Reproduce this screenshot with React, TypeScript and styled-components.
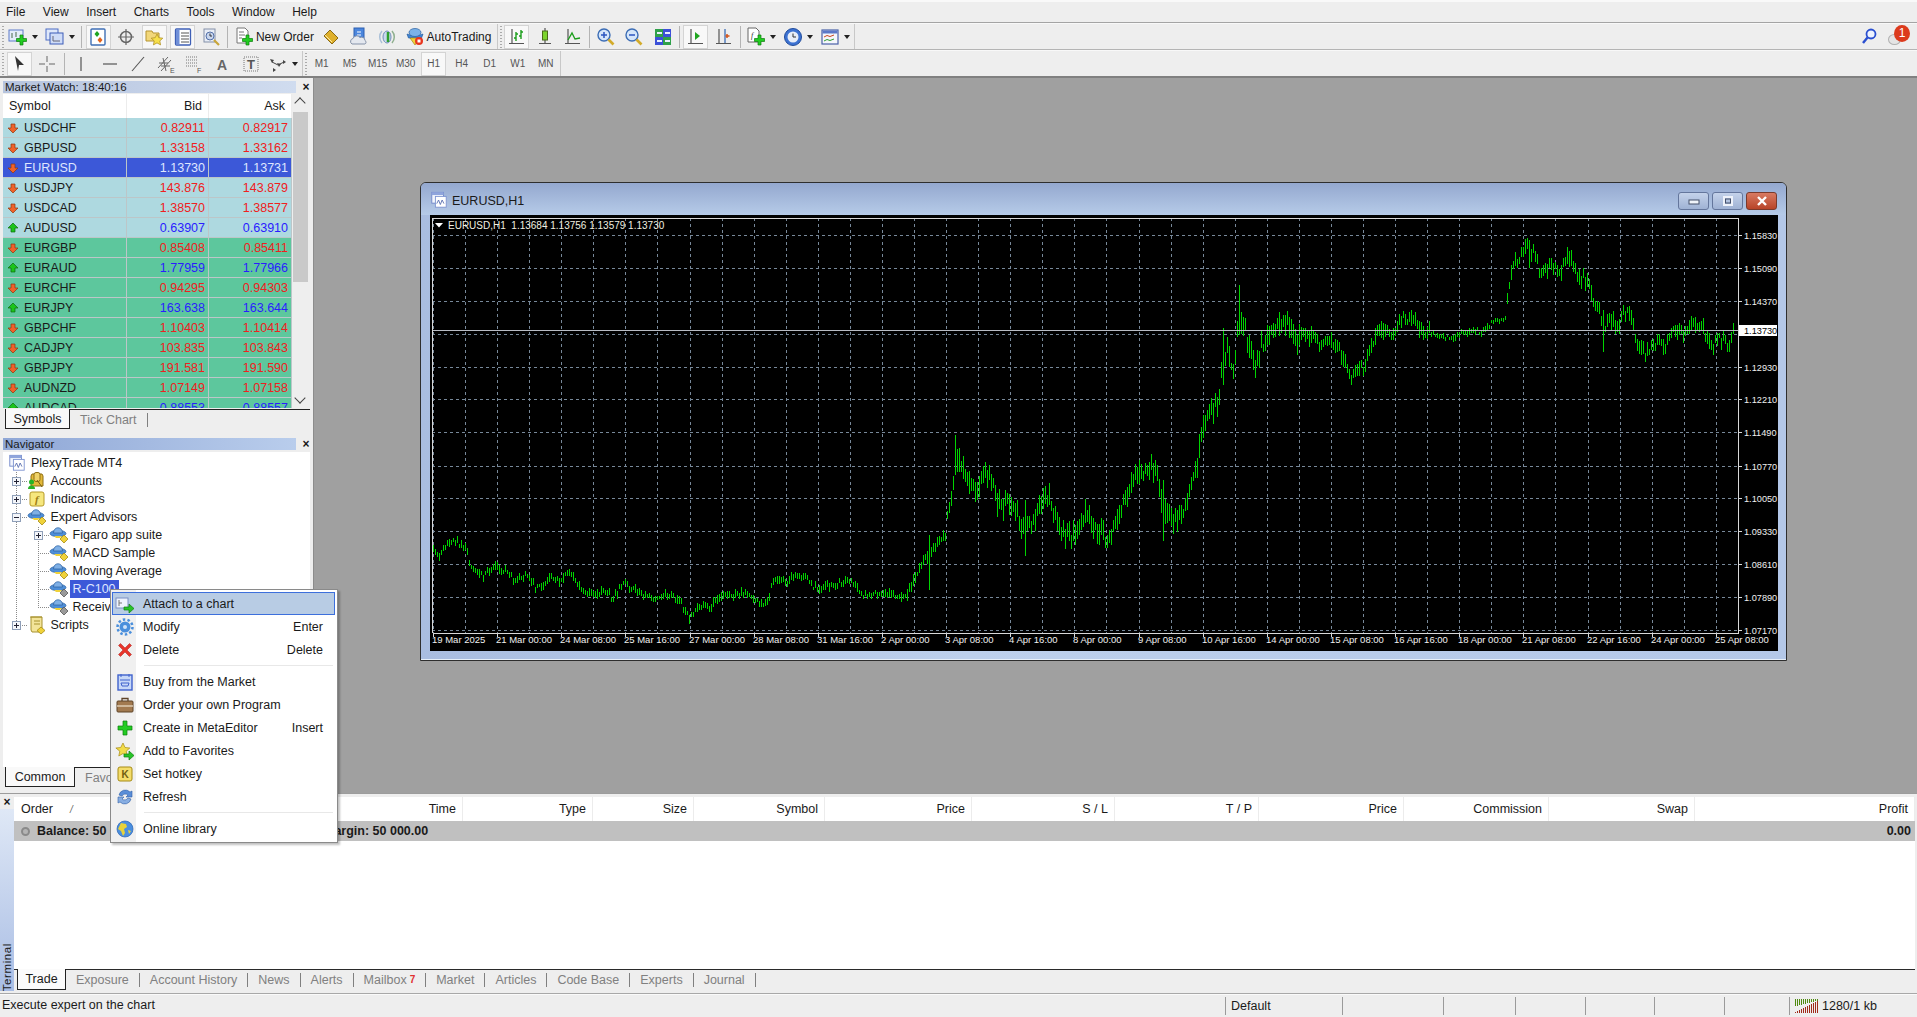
import React, { useMemo } from "react";
import styled, { createGlobalStyle } from "styled-components";

const GlobalStyle = createGlobalStyle`
  html, body { margin: 0; padding: 0; overflow: hidden; background: #eeeeee; }
  body { font: 12px "Liberation Sans", Arial, sans-serif; color: #1a1a1a; }
  * { box-sizing: border-box; }
`;

/* ---------- icons ---------- */
const Ico = ({ children, size = 20 }: { children: React.ReactNode; size?: number }) => (
  <svg width={size} height={size} viewBox="0 0 20 20" style={{ display: "block", flex: "none" }}>
    {children}
  </svg>
);
const GreenPlus = () => (
  <path d="M12 8h3v3.5h3.5v3H15V18h-3v-3.500H8.500v-3H12z" fill="#22cc22" stroke="#0d7d0d" strokeWidth=".7" />
);
const GreenArrow = () => (
  <path d="M9 13h5v-3l5 4.500-5 4.500v-3H9z" fill="#28c428" stroke="#0f7f0f" strokeWidth=".7" />
);
const Axes = () => <path d="M5 2v15M2 16.500h15" stroke="#555" strokeWidth="1.200" fill="none" />;
const Caret = styled.span`
  width: 0; height: 0; flex: none;
  border-left: 3px solid transparent; border-right: 3px solid transparent; border-top: 4px solid #222;
`;

const IcoNewChart = () => (
  <Ico>
    <rect x="1" y="3" width="14" height="11" fill="#e4ecfb" stroke="#5d7bc9" />
    <path d="M4 6v5M8 5v5" stroke="#4a6a4a" />
    <GreenPlus />
  </Ico>
);
const IcoProfiles = () => (
  <Ico>
    <rect x="1" y="2" width="12" height="11" fill="#dfe8fa" stroke="#4d6cc4" />
    <rect x="5" y="6" width="13" height="11" fill="#cfdcf7" stroke="#3d5cb8" />
    <path d="M8 9v5h7" stroke="#667" fill="none" />
  </Ico>
);
const IcoMarketWatch = () => (
  <Ico>
    <rect x="3" y="2" width="14" height="16" rx="1" fill="#fff" stroke="#3f6fb5" strokeWidth="1.400" />
    <path d="M9 4l2.500 3-2.500 3-2.500-3z" fill="#1fa51f" />
    <path d="M12 10l2.500 3-2.500 3-2.500-3z" fill="#e2621b" />
  </Ico>
);
const IcoCrosshair = () => (
  <Ico>
    <circle cx="10" cy="10" r="5.500" fill="#eee" stroke="#666" strokeWidth="1.500" />
    <path d="M10 2v16M2 10h16" stroke="#666" strokeWidth="1.200" />
  </Ico>
);
const IcoNavigator = () => (
  <Ico>
    <path d="M2 4h6l1 2h6v8H2z" fill="#f2d77a" stroke="#b59431" />
    <path d="M13 7l1.800 3.700 4 .5-3 2.700.8 4-3.600-2-3.600 2 .8-4-3-2.700 4-.5z" fill="#f7e04b" stroke="#a98a1e" strokeWidth=".7" />
  </Ico>
);
const IcoTerminal = () => (
  <Ico>
    <rect x="2.500" y="2" width="15" height="16" rx="1" fill="#fff" stroke="#3e5fb6" strokeWidth="1.300" />
    <rect x="3" y="2.500" width="3.500" height="15" fill="#6f8fd8" />
    <path d="M8 6h8M8 9h8M8 12h8M8 15h8" stroke="#555" />
  </Ico>
);
const IcoTester = () => (
  <Ico>
    <rect x="3" y="2" width="11" height="13" fill="#e8edf6" stroke="#8390a8" />
    <circle cx="9" cy="9" r="4" fill="#c8d6ee" stroke="#5470a8" />
    <path d="M9 6.500V9h2" stroke="#333" fill="none" />
    <path d="M13 13l5 5" stroke="#c9a63a" strokeWidth="2.200" />
  </Ico>
);
const IcoNewOrder = () => (
  <Ico>
    <path d="M3 1h8l3 3v12H3z" fill="#fff" stroke="#777" />
    <path d="M5 5h5M5 8h6M5 11h3" stroke="#777" />
    <GreenPlus />
  </Ico>
);
const IcoBook = () => (
  <Ico>
    <path d="M9 3l8 8-6 6-8-8z" fill="#dfb02c" stroke="#8a6a14" />
    <path d="M4 8l7 7" stroke="#fbe9a8" />
  </Ico>
);
const IcoCloud = () => (
  <Ico>
    <rect x="5" y="1" width="10" height="12" fill="#4b86dd" stroke="#2d5fb0" />
    <path d="M8 5h4M8 8h4" stroke="#fff" />
    <path d="M3 17a3 3 0 0 1 1-5.500 4 4 0 0 1 7-1 3.500 3.500 0 0 1 5 3 2 2 0 0 1 0 3.500z" fill="#e4e8ef" stroke="#8592a8" />
  </Ico>
);
const IcoSignal = () => (
  <Ico>
    <path d="M5 4a9 9 0 0 0 0 12" fill="none" stroke="#aac0d8" strokeWidth="1.500" />
    <path d="M15 4a9 9 0 0 1 0 12" fill="none" stroke="#8fb08f" strokeWidth="1.500" />
    <ellipse cx="10" cy="10" rx="4" ry="6" fill="#c8d8ee" stroke="#6f8cb8" />
    <path d="M11 5v10" stroke="#2ea02e" strokeWidth="2.500" />
  </Ico>
);
const IcoAuto = () => (
  <Ico>
    <path d="M2 7c2 1.500 14 1.500 16 0l-1.500 4H3.500z" fill="#3f86d6" stroke="#275d9f" strokeWidth=".7" />
    <ellipse cx="10" cy="5.500" rx="6" ry="4" fill="#7bb2e8" stroke="#275d9f" strokeWidth=".7" />
    <path d="M5 11l5 7 5-7z" fill="#f0d23a" stroke="#a68b14" strokeWidth=".7" />
    <circle cx="14" cy="14" r="4" fill="#e8361e" />
    <rect x="12.500" y="12.500" width="3" height="3" fill="#fff" />
  </Ico>
);
const IcoBars = () => (
  <Ico>
    <Axes />
    <path d="M9 5v9M9 11H7M9 7h2M14 3v9M14 9h-2M14 5h2" stroke="#1a9d1a" strokeWidth="1.400" fill="none" />
  </Ico>
);
const IcoCandles = () => (
  <Ico>
    <path d="M4 16.500h12M10 1v3M10 13v3" stroke="#555" strokeWidth="1.200" />
    <rect x="7.500" y="4" width="5" height="9" fill="#7cd42c" stroke="#4a6a1a" />
  </Ico>
);
const IcoLine = () => (
  <Ico>
    <Axes />
    <path d="M5 13L9 6l3 6 5-1" stroke="#1a9d1a" strokeWidth="1.300" fill="none" />
  </Ico>
);
const IcoZoom = ({ minus }: { minus?: boolean }) => (
  <Ico>
    <circle cx="8" cy="8" r="6" fill="#d5e6fa" stroke="#3c6db5" strokeWidth="1.400" />
    <path d={minus ? "M5 8h6" : "M5 8h6M8 5v6"} stroke="#2a55c0" strokeWidth="1.500" />
    <path d="M12.500 12.500l5 5" stroke="#d3ab2a" strokeWidth="2.600" />
  </Ico>
);
const IcoTile = () => (
  <Ico>
    <rect x="2" y="2" width="8" height="8" fill="#2fa14a" />
    <rect x="10" y="2" width="8" height="8" fill="#3c50d8" />
    <rect x="2" y="10" width="8" height="8" fill="#3c50d8" />
    <rect x="10" y="10" width="8" height="8" fill="#2fa14a" />
    <path d="M4 6h5M12 6h5M4 14h5M12 14h5" stroke="#e8f0ff" strokeWidth="2" />
  </Ico>
);
const IcoScroll = () => (
  <Ico>
    <Axes />
    <path d="M9 5v8l5-4z" fill="#1fa51f" />
  </Ico>
);
const IcoShift = () => (
  <Ico>
    <Axes />
    <path d="M11 2v14" stroke="#3c6db5" strokeWidth="1.300" />
    <path d="M13 7v4M11.500 9h4" stroke="#d4541a" strokeWidth="1.500" />
  </Ico>
);
const IcoIndicator = () => (
  <Ico>
    <path d="M2 1h8l3 3v11H2z" fill="#fff" stroke="#666" />
    <text x="5" y="11" fontSize="8" fontFamily="Liberation Serif" fontStyle="italic" fill="#333">f</text>
    <GreenPlus />
  </Ico>
);
const IcoClock = () => (
  <Ico>
    <circle cx="10" cy="10" r="8.500" fill="#3c72d2" stroke="#214c9c" />
    <circle cx="10" cy="10" r="5.500" fill="#e8eef8" />
    <path d="M10 6.500V10h3" stroke="#333" strokeWidth="1" fill="none" />
  </Ico>
);
const IcoTemplate = () => (
  <Ico>
    <rect x="2" y="3" width="16" height="14" fill="#f4f6fb" stroke="#4a62a8" strokeWidth="1.200" />
    <rect x="2.500" y="3.500" width="15" height="3" fill="#5a78c8" />
    <path d="M4 10l3-1.500 3 1 4-1.500" stroke="#c8461e" fill="none" />
    <path d="M4 14l3-1.500 3 1 4-1.500" stroke="#2e9d2e" fill="none" />
  </Ico>
);
const IcoCursor = () => (
  <Ico>
    <path d="M6 2l9 9h-5l-1 6z" fill="#333" />
  </Ico>
);
const IcoCross = () => (
  <Ico>
    <path d="M10 2v6M10 12v6M2 10h6M12 10h6" stroke="#666" />
  </Ico>
);
const IcoVLine = () => (<Ico><path d="M10 3v14" stroke="#555" strokeWidth="1.200" /></Ico>);
const IcoHLine = () => (<Ico><path d="M3 10h14" stroke="#555" strokeWidth="1.200" /></Ico>);
const IcoTrend = () => (<Ico><path d="M4 17L16 3" stroke="#555" strokeWidth="1.100" /></Ico>);
const IcoChannel = () => (
  <Ico>
    <path d="M2 14L12 3M5 17L15 6M3 9h9M5 12h9M7 4l3 13" stroke="#666" fill="none" />
    <text x="14" y="19" fontSize="7" fill="#555">E</text>
  </Ico>
);
const IcoFibo = () => (
  <Ico>
    <path d="M2 3h12M2 6h12M2 9h12M2 12h12" stroke="#777" strokeDasharray="1 1" />
    <text x="13" y="19" fontSize="7" fill="#555">F</text>
  </Ico>
);
const IcoTextA = () => (
  <Ico>
    <text x="5" y="16" fontSize="14" fontWeight="bold" fill="#666">A</text>
  </Ico>
);
const IcoTextT = () => (
  <Ico>
    <rect x="3" y="3" width="14" height="14" fill="none" stroke="#777" strokeDasharray="1 1" />
    <text x="6" y="15" fontSize="13" fontWeight="bold" fill="#555">T</text>
  </Ico>
);
const IcoShapes = () => (
  <Ico>
    <path d="M2 5l4 1-2 3zM9 9l4 1-2 3zM15 6l3 2-3 2zM5 14l3 2-3 2z" fill="#444" />
    <path d="M4 8l6 3 6-3" stroke="#444" fill="none" />
  </Ico>
);
const IcoSearch = () => (
  <Ico>
    <circle cx="12" cy="7" r="4.500" fill="#eef3ff" stroke="#2a4fd0" strokeWidth="1.800" />
    <path d="M8.500 10.500L4 16" stroke="#2a4fd0" strokeWidth="2.400" />
  </Ico>
);
const IcoWindow = () => (
  <Ico size={18}>
    <rect x="2" y="1.500" width="13" height="12" fill="#f2f5fc" stroke="#6f86c8" />
    <rect x="6" y="6" width="12" height="12" fill="#fff" stroke="#7d93d0" />
    <rect x="2" y="1.500" width="13" height="3" fill="#8fa5dc" />
    <path d="M7.500 14l2-4 2 5 2-5 2 4" stroke="#5a6fb0" fill="none" />
  </Ico>
);
const IcoAccounts = () => (
  <Ico>
    <path d="M5 3h10l1 2v10H4V5z" fill="#e3b93a" stroke="#8f6f14" />
    <rect x="7" y="1.500" width="6" height="9" rx="2" fill="#efd268" stroke="#8f6f14" />
    <circle cx="4.500" cy="11" r="2.500" fill="#27b327" />
    <path d="M1 18a3.500 3.500 0 0 1 7 0z" fill="#27b327" />
    <path d="M10 9l5 7" stroke="#7a6014" />
  </Ico>
);
const IcoIndicators = () => (
  <Ico>
    <rect x="3" y="3" width="14" height="14" rx="2" fill="#f6e77e" stroke="#b69a28" />
    <text x="8" y="14" fontSize="11" fontWeight="bold" fontStyle="italic" fontFamily="Liberation Serif" fill="#9c7c14">f</text>
  </Ico>
);
const IcoHat = ({ grey }: { grey?: boolean }) => (
  <Ico>
    <ellipse cx="9" cy="8.500" rx="8" ry="3.200" fill="#4f8fd8" stroke="#2a5f9f" strokeWidth=".7" />
    <path d="M4.500 8c0-7 9-7 9 0z" fill="#7fb0e6" stroke="#2a5f9f" strokeWidth=".7" />
    <path d="M5 11h8l-2 2H7z" fill="#f0d23a" />
    <path d="M15 10l4 4-4 4-4-4z" fill={grey ? "#9a9a9a" : "#f0d23a"} stroke={grey ? "#555" : "#a68b14"} strokeWidth=".8" />
  </Ico>
);
const IcoScript = () => (
  <Ico>
    <path d="M4 2h11v12c0 2-1 3-2 3H5l-1-2z" fill="#f3e49a" stroke="#a8922e" />
    <path d="M3 2h12M7 6h6M7 9h6" stroke="#a8922e" />
    <path d="M14 12l4 3.500-4 3.500-4-3.500z" fill="#f0d23a" stroke="#a68b14" strokeWidth=".8" />
  </Ico>
);
const IcoAttach = () => (
  <Ico>
    <rect x="1" y="4" width="12" height="10" fill="#eef3fc" stroke="#7a90c4" />
    <path d="M4 6v6M4 9h3" stroke="#777" />
    <GreenArrow />
  </Ico>
);
const IcoGear = () => (
  <Ico>
    <circle cx="10" cy="10" r="5.500" fill="#4a8fdc" />
    <circle cx="10" cy="10" r="7.500" fill="none" stroke="#4a8fdc" strokeWidth="2.500" strokeDasharray="2.500 2.200" />
    <circle cx="10" cy="10" r="2" fill="#cfe2f8" />
  </Ico>
);
const IcoDelete = () => (
  <Ico>
    <path d="M3.500 5.500l2-2L10 8l4.500-4.500 2 2L12 10l4.500 4.500-2 2L10 12l-4.500 4.500-2-2L8 10z" fill="#e8342a" stroke="#a91e18" strokeWidth=".5" />
  </Ico>
);
const IcoMarket = () => (
  <Ico>
    <rect x="3" y="3" width="14" height="15" fill="#c7d8f8" stroke="#3f62cc" strokeWidth="1.400" />
    <path d="M6 2v3M14 2v3M5 8h10M6 11h8l-1 3H7z" stroke="#3f62cc" fill="none" />
  </Ico>
);
const IcoCase = () => (
  <Ico>
    <rect x="2" y="6" width="16" height="11" rx="1" fill="#a27a50" stroke="#5f4428" />
    <path d="M7 6V3.500h6V6" stroke="#5f4428" strokeWidth="1.300" fill="none" />
    <path d="M2 11h16" stroke="#e8dac4" strokeWidth="1.300" />
  </Ico>
);
const IcoPlus = () => (
  <Ico>
    <path d="M8 3h4v5h5v4h-5v5H8v-5H3V8h5z" fill="#22cc22" stroke="#0d7d0d" strokeWidth=".7" />
  </Ico>
);
const IcoStar = () => (
  <Ico>
    <path d="M8 2l2 4.500 4.800.5-3.600 3.200 1 4.800-4.200-2.500-4.200 2.500 1-4.800L.9 7l4.800-.5z" fill="#f2dc4a" stroke="#a68b14" strokeWidth=".7" />
    <GreenArrow />
  </Ico>
);
const IcoHotkey = () => (
  <Ico>
    <rect x="3" y="3" width="14" height="14" rx="2" fill="#f4dd6c" stroke="#a68b14" />
    <text x="6.500" y="14" fontSize="10" fontWeight="bold" fill="#6f5c10">K</text>
  </Ico>
);
const IcoRefresh = () => (
  <Ico>
    <path d="M4 8a6.500 6.500 0 0 1 11-3l2-1v6h-6l2-2a4 4 0 0 0-6 1z" fill="#5a8ed8" stroke="#2f5fa8" strokeWidth=".6" />
    <path d="M16 12a6.500 6.500 0 0 1-11 3l-2 1v-6h6l-2 2a4 4 0 0 0 6-1z" fill="#88aee2" stroke="#2f5fa8" strokeWidth=".6" />
  </Ico>
);
const IcoGlobe = () => (
  <Ico>
    <circle cx="10" cy="10" r="8" fill="#4a8fe0" stroke="#2a62b0" strokeWidth=".7" />
    <path d="M6 4l5 1 1 3-3 2 1 4-2 3-2-5-3-2zM13 11l3 1-2 3z" fill="#e8d23a" />
  </Ico>
);
const ArrowMark = ({ up }: { up: boolean }) => (
  <svg width="12" height="12" viewBox="0 0 12 12" style={{ display: "block", flex: "none" }}>
    {up ? (
      <path d="M6 1l5 5H8v4H4V6H1z" fill="#1cc41c" stroke="#0b6b0b" strokeWidth=".7" />
    ) : (
      <path d="M6 11L1 6h3V2h4v4h3z" fill="#f0622a" stroke="#8c3610" strokeWidth=".7" />
    )}
  </svg>
);

/* ---------- page frame ---------- */
const Page = styled.div`
  position: relative;
  width: 1917px;
  height: 1017px;
  overflow: hidden;
  display: flex;
  flex-direction: column;
  background: #eeeeee;
  border-top: 2px solid #f9f9f9;
`;
const MenuBar = styled.div`
  height: 21px;
  flex: none;
  display: flex;
  align-items: center;
  padding: 0 0 1px 6px;
  gap: 17.500px;
  border-bottom: 1px solid #a4a4a4;
`;
const MenuLabel = styled.span`
  font-size: 12px;
`;

const ToolRow = styled.div<{ $last?: boolean }>`
  height: ${(p) => (p.$last ? 28 : 27)}px;
  flex: none;
  display: flex;
  align-items: center;
  padding-right: 10px;
  border-bottom: ${(p) => (p.$last ? "2px solid #808080" : "1px solid #b4b4b4")};
  border-top: 1px solid #f8f8f8;
`;
const Toolbar = styled.div`
  display: flex;
  align-items: center;
  height: 100%;
  border-right: 1px solid #c8c8c8;
`;
const Grip = styled.span`
  width: 5px;
  height: 22px;
  flex: none;
  background: repeating-linear-gradient(#aaa 0 1px, transparent 1px 3px);
  background-size: 2px 100%;
  background-repeat: no-repeat;
  background-position: 2px 0;
`;
const ToolBtn = styled.span<{ $active?: boolean }>`
  width: 25px;
  height: 24px;
  margin: 0 1.600px;
  flex: none;
  display: flex;
  align-items: center;
  justify-content: center;
  border: 1px solid ${(p) => (p.$active ? "#d4d4d4" : "transparent")};
  background: ${(p) => (p.$active ? "#f8f8f8" : "transparent")};
`;
const DropBtn = styled.span`
  width: 37px;
  height: 24px;
  flex: none;
  display: flex;
  align-items: center;
  padding-left: 3px;
  gap: 4px;
`;
const LabelBtn = styled.span<{ $width: number; $pad: number }>`
  width: ${(p) => p.$width}px;
  height: 24px;
  flex: none;
  display: flex;
  align-items: center;
  gap: 2px;
  padding-left: ${(p) => p.$pad}px;
  font-size: 12px;
  white-space: nowrap;
`;
const ToolSep = styled.span<{ $gapLeft?: number }>`
  width: 1px;
  height: 22px;
  flex: none;
  margin: 0 2px 0 ${(p) => p.$gapLeft ?? 2}px;
  background: #b4b4b4;
`;
const TfBtn = styled.span<{ $active?: boolean }>`
  width: 25px;
  height: 24px;
  margin: 0 1.500px;
  flex: none;
  display: flex;
  align-items: center;
  justify-content: center;
  font-size: 10px;
  color: #555;
  border: 1px solid ${(p) => (p.$active ? "#d4d4d4" : "transparent")};
  background: ${(p) => (p.$active ? "#f8f8f8" : "transparent")};
`;
const SearchBox = styled.div`
  margin-left: auto;
  display: flex;
  align-items: center;
  gap: 6px;
`;
const Bubble = styled.div`
  position: relative;
  width: 22px;
  height: 24px;
`;
const BubbleTail = styled.span`
  position: absolute;
  left: 3px;
  top: 9px;
  width: 13px;
  height: 11px;
  border-radius: 50%;
  background: #e4e4e4;
  border: 1px solid #b0b0b0;
`;
const Badge = styled.span`
  position: absolute;
  left: 9px;
  top: 0;
  width: 16px;
  height: 17px;
  border-radius: 50%;
  background: #dc3a1c;
  color: #fff;
  font-size: 12px;
  text-align: center;
  line-height: 17px;
`;

const Main = styled.div`
  height: 715px;
  flex: none;
  display: flex;
`;
const LeftPanel = styled.div`
  width: 314px;
  flex: none;
  padding-top: 2px;
  border-right: 1px solid #8c8c8c;
`;
const PaneHead = styled.div`
  display: flex;
  align-items: center;
  height: 13px;
  padding-left: 3px;
`;
const PaneTitle = styled.div<{ $focused?: boolean }>`
  width: 293px;
  height: 12px;
  padding-left: 2px;
  font-size: 11.500px;
  line-height: 12px;
  white-space: nowrap;
  background: linear-gradient(
    to right,
    ${(p) => (p.$focused ? "#8fa7d6, #b9cdec" : "#b6c4de, #d0dcef")}
  );
`;
const PaneClose = styled.span`
  margin-left: 3px;
  width: 14px;
  text-align: center;
  font-size: 12px;
  font-weight: bold;
  line-height: 12px;
`;

/* ---------- market watch ---------- */
const WatchFrame = styled.div`
  margin: 1px 0 0 3px;
  height: 315px;
  width: 307px;
  display: flex;
`;
const WatchTable = styled.div`
  width: 289px;
  flex: none;
`;
const WatchHeader = styled.div`
  display: grid;
  grid-template-columns: 124px 82px 83px;
  height: 24px;
  background: #fff;
`;
const WatchHeadCell = styled.div<{ $right?: boolean }>`
  display: flex;
  align-items: center;
  justify-content: ${(p) => (p.$right ? "flex-end" : "flex-start")};
  padding: ${(p) => (p.$right ? "0 6px 0 0" : "0 0 0 6px")};
  font-size: 12.500px;
  border-right: 1px solid #ececec;
`;
const WatchBody = styled.div`
  height: 290px;
  overflow: hidden;
`;
const WatchRowBox = styled.div<{ $bg: string; $selected?: boolean }>`
  display: grid;
  grid-template-columns: 124px 82px 83px;
  height: 20px;
  background: ${(p) => p.$bg};
  color: ${(p) => (p.$selected ? "#dfe6ff" : "#1a1a1a")};
  border-bottom: 1px solid #bcc6c8;
`;
const SymbolCell = styled.div`
  display: flex;
  align-items: center;
  gap: 5px;
  padding-left: 4px;
  font-size: 12.500px;
  border-right: 1px solid #bcc6c8;
`;
const PriceCell = styled.div<{ $color: string }>`
  display: flex;
  align-items: center;
  justify-content: flex-end;
  padding-right: 3px;
  font-size: 12.500px;
  color: ${(p) => p.$color};
  border-right: 1px solid #bcc6c8;
`;
const ScrollBar = styled.div`
  position: relative;
  width: 16px;
  margin-left: 1px;
  background: #eeeeee;
`;
const ScrollThumb = styled.div`
  position: absolute;
  left: 0;
  top: 18px;
  width: 15px;
  height: 170px;
  background: #c9c9c9;
`;
const ScrollArrow = styled.span<{ $down?: boolean }>`
  position: absolute;
  left: 3px;
  ${(p) => (p.$down ? "bottom: 7px;" : "top: 5px;")}
  width: 8px;
  height: 8px;
  border-left: 1.500px solid #444;
  border-top: 1.500px solid #444;
  transform: ${(p) => (p.$down ? "rotate(225deg) translate(0, 0)" : "rotate(45deg)")};
`;
const PaneTabs = styled.div<{ $height: number }>`
  display: flex;
  align-items: flex-start;
  height: ${(p) => p.$height}px;
  margin-left: 5px;
  width: 305px;
  border-top: 1px solid #222;
`;
const ActiveTab = styled.div<{ $width: number }>`
  width: ${(p) => p.$width}px;
  height: 20px;
  margin-top: -1px;
  display: flex;
  align-items: center;
  justify-content: center;
  font-size: 12.500px;
  background: #f9f9f9;
  border-left: 1px solid #222;
  border-right: 1.500px solid #222;
  border-bottom: 1.500px solid #222;
`;
const IdleTab = styled.div`
  height: 19px;
  display: flex;
  align-items: center;
  color: #808080;
  font-size: 12.500px;
  padding: 0 10px;
`;
const TabBar = styled.div`
  width: 1px;
  height: 14px;
  margin-top: 3px;
  background: #808080;
`;

/* ---------- navigator ---------- */
const Tree = styled.div`
  position: relative;
  margin: 2px 0 0 3px;
  width: 307px;
  height: 315px;
  padding-top: 2px;
  background: #fff;
`;
const TreeLines = styled.svg`
  position: absolute;
  left: 0;
  top: 0;
`;
const TreeRow = styled.div<{ $pad: number }>`
  position: relative;
  height: 18px;
  display: flex;
  align-items: center;
  padding-left: ${(p) => p.$pad}px;
`;
const Expander = styled.span<{ $empty?: boolean }>`
  position: relative;
  width: 9px;
  height: 9px;
  flex: none;
  margin-right: 7px;
  ${(p) => (p.$empty ? "" : "border: 1px solid #8f9fb8; background: #f4f6fa;")}
`;
const ExpanderBar = styled.i<{ $vertical?: boolean }>`
  position: absolute;
  background: #223;
  ${(p) => (p.$vertical ? "left: 3px; top: 1px; width: 1px; height: 5px;" : "left: 1px; top: 3px; width: 5px; height: 1px;")}
`;
const TreeIcon = styled.span`
  width: 18px;
  flex: none;
  display: flex;
  justify-content: center;
  margin-right: 5px;
`;
const TreeText = styled.span<{ $selected?: boolean }>`
  font-size: 12.500px;
  height: 18px;
  line-height: 18px;
  padding: 0 ${(p) => (p.$selected ? "3px" : "0")};
  margin-left: ${(p) => (p.$selected ? "-3px" : "0")};
  background: ${(p) => (p.$selected ? "#3c58d8" : "transparent")};
  color: ${(p) => (p.$selected ? "#dfe6ff" : "#1a1a1a")};
`;

/* ---------- chart window ---------- */
const Workspace = styled.div`
  position: relative;
  flex: 1;
  background: #a0a0a0;
`;
const ChartWindow = styled.div`
  position: absolute;
  left: 106px;
  top: 104px;
  width: 1367px;
  height: 479px;
  padding: 0 8px 9px 9px;
  border: 1px solid #2e2e2e;
  border-radius: 6px 6px 0 0;
  background: linear-gradient(to right, #a9bde0, #bdd0ec 40%, #b4c8e8);
  box-shadow: inset 0 -1px 0 #e8f0fa;
`;
const TitleBar = styled.div`
  height: 32px;
  margin: 0 -8px 0 -9px;
  padding: 8px 9px 0 9px;
  display: flex;
  align-items: flex-start;
  gap: 4px;
  border-radius: 5px 5px 0 0;
  background: linear-gradient(#94a8cf, #b6cbe8);
`;
const WindowTitle = styled.span`
  font-size: 12.500px;
  line-height: 20px;
  color: #1a1a1a;
`;
const Caption = styled.div`
  margin-left: auto;
  display: flex;
  gap: 3px;
  margin-top: 1px;
`;
const CaptionBtn = styled.span<{ $close?: boolean }>`
  width: 31px;
  height: 18px;
  display: flex;
  align-items: center;
  justify-content: center;
  border: 1px solid ${(p) => (p.$close ? "#7a3a2c" : "#64769c")};
  border-radius: 3px;
  background: ${(p) =>
    p.$close ? "linear-gradient(#d87a62, #b84428)" : "linear-gradient(#c4d2ea, #9fb2d4)"};
`;
const ChartCanvas = styled.svg`
  display: block;
  background: #000;
`;
const ChartText = styled.text`
  font-family: "Liberation Sans", Arial, sans-serif;
`;

/* ---------- context menu ---------- */
const ContextMenu = styled.div`
  position: absolute;
  left: 110px;
  top: 587px;
  width: 228px;
  padding: 2px 2px 2px 1px;
  border: 1px solid #8a8a8a;
  background: linear-gradient(to right, #f0f0f0 25px, #fff 25px);
  box-shadow: 2px 2px 2px rgba(0, 0, 0, 0.25);
  z-index: 5;
`;
const MenuItem = styled.div<{ $hot?: boolean }>`
  height: 23px;
  display: flex;
  align-items: center;
  padding: 0 11px 0 2px;
  border: 1px solid ${(p) => (p.$hot ? "#3c6fdc" : "transparent")};
  background: ${(p) => (p.$hot ? "#b8cce4" : "transparent")};
`;
const MenuIcon = styled.span`
  width: 20px;
  flex: none;
  margin-right: 8px;
`;
const MenuText = styled.span`
  font-size: 12.500px;
`;
const MenuKey = styled.span`
  margin-left: auto;
  font-size: 12.500px;
`;
const MenuRule = styled.div`
  height: 1px;
  margin: 4px 2px 4px 32px;
  background: #e8e8e8;
`;

/* ---------- terminal ---------- */
const Terminal = styled.div`
  height: 200px;
  flex: none;
  display: flex;
  border-top: 1px solid #9c9c9c;
`;
const TermSide = styled.div`
  width: 14px;
  flex: none;
  display: flex;
  flex-direction: column;
`;
const TermClose = styled.div`
  height: 15px;
  padding-top: 1px;
  text-align: center;
  font-size: 12px;
  font-weight: bold;
  line-height: 14px;
`;
const TermStrip = styled.div`
  height: 182px;
  display: flex;
  justify-content: flex-end;
  flex-direction: column;
  align-items: center;
  background: linear-gradient(#dfe8f6, #a9bde4);
`;
const TermLabel = styled.span`
  writing-mode: vertical-rl;
  transform: rotate(180deg);
  font-size: 11.500px;
  letter-spacing: 0.600px;
`;
const TermBody = styled.div`
  flex: 1;
  padding-top: 3px;
  min-width: 0;
`;
const TermHeader = styled.div`
  display: grid;
  grid-template-columns: 216px 233px 130px 101px 131px 147px 143px 144px 145px 145px 146px 220px;
  height: 24px;
  width: 1901px;
  background: #fff;
`;
const TermHeadCell = styled.div<{ $left?: boolean }>`
  display: flex;
  align-items: center;
  justify-content: ${(p) => (p.$left ? "flex-start" : "flex-end")};
  padding: ${(p) => (p.$left ? "0 0 0 7px" : "0 6px 0 0")};
  font-size: 12.500px;
  border-right: 1px solid #ececec;
`;
const SortMark = styled.span`
  margin-left: 17px;
  font-size: 10px;
  color: #666;
  font-style: italic;
`;
const BalanceRow = styled.div`
  width: 1901px;
  height: 20px;
  display: flex;
  align-items: center;
  padding: 0 4px 0 7px;
  background: #c0c0c0;
  font-weight: bold;
  font-size: 12.500px;
`;
const BalanceDot = styled.span`
  width: 9px;
  height: 9px;
  flex: none;
  margin-right: 7px;
  border-radius: 50%;
  border: 2px solid #8a8a8a;
  background: #b4b4b4;
`;
const BalanceText = styled.span`
  white-space: pre;
`;
const BalanceProfit = styled.span`
  margin-left: auto;
`;
const TermRows = styled.div`
  height: 128px;
  width: 1901px;
  background: #fff;
`;
const TermTabs = styled.div`
  display: flex;
  align-items: flex-start;
  height: 24px;
  width: 1901px;
  padding-left: 3px;
  border-top: 1.500px solid #2a2a2a;
`;
const TermTabActive = styled.div`
  width: 49px;
  height: 21px;
  margin-top: -1px;
  display: flex;
  align-items: center;
  justify-content: center;
  font-size: 12.500px;
  background: #fbfbfb;
  border-left: 1px solid #222;
  border-right: 1.500px solid #222;
  border-bottom: 1.500px solid #222;
`;
const TermTab = styled.div`
  height: 20px;
  display: flex;
  align-items: center;
  padding: 0 10px;
  color: #808080;
  font-size: 12.500px;
  white-space: nowrap;
`;
const MailCount = styled.sub`
  color: #e03030;
  font-size: 10px;
  font-weight: bold;
  margin-left: 3px;
  line-height: 0;
`;
const StatusBar = styled.div`
  height: 22px;
  flex: none;
  display: flex;
  align-items: flex-end;
  border-top: 1px solid #a8a8a8;
  box-shadow: inset 0 1px 0 #fafafa;
`;
const StatusText = styled.div`
  width: 1225px;
  height: 18px;
  padding-left: 2px;
  font-size: 12.500px;
  line-height: 17px;
  flex: none;
`;
const StatusCell = styled.div<{ $width: number }>`
  width: ${(p) => p.$width}px;
  height: 18px;
  flex: none;
  display: flex;
  align-items: center;
  gap: 4px;
  padding-left: 5px;
  font-size: 12.500px;
  border-left: 1px solid #9a9a9a;
`;

/* ---------- data ---------- */
const BLUE_ROW = "#aed9e0";
const GREEN_ROW = "#5dc79d";
const SEL_ROW = "#3c58d8";
const quotes: [string, string, string, boolean, string][] = [
  ["USDCHF", "0.82911", "0.82917", false, BLUE_ROW],
  ["GBPUSD", "1.33158", "1.33162", false, BLUE_ROW],
  ["EURUSD", "1.13730", "1.13731", false, SEL_ROW],
  ["USDJPY", "143.876", "143.879", false, BLUE_ROW],
  ["USDCAD", "1.38570", "1.38577", false, BLUE_ROW],
  ["AUDUSD", "0.63907", "0.63910", true, BLUE_ROW],
  ["EURGBP", "0.85408", "0.85411", false, GREEN_ROW],
  ["EURAUD", "1.77959", "1.77966", true, GREEN_ROW],
  ["EURCHF", "0.94295", "0.94303", false, GREEN_ROW],
  ["EURJPY", "163.638", "163.644", true, GREEN_ROW],
  ["GBPCHF", "1.10403", "1.10414", false, GREEN_ROW],
  ["CADJPY", "103.835", "103.843", false, GREEN_ROW],
  ["GBPJPY", "191.581", "191.590", false, GREEN_ROW],
  ["AUDNZD", "1.07149", "1.07158", false, GREEN_ROW],
  ["AUDCAD", "0.88553", "0.88557", true, GREEN_ROW],
];

const termTabs = ["Exposure", "Account History", "News", "Alerts", "Mailbox", "Market", "Articles", "Code Base", "Experts", "Journal"];
const termCols = ["Time", "Type", "Size", "Symbol", "Price", "S / L", "T / P", "Price", "Commission", "Swap", "Profit"];
const statusCells = [117, 101, 72, 70, 69, 70, 65];

const priceLabels: [number, string][] = [
  [235, "1.15830"], [268, "1.15090"], [301, "1.14370"], [367, "1.12930"], [399, "1.12210"],
  [432, "1.11490"], [466, "1.10770"], [498, "1.10050"], [531, "1.09330"], [564, "1.08610"],
  [597, "1.07890"], [630, "1.07170"],
];
const gridRows = [235, 268, 301, 334, 367, 399, 432, 466, 498, 531, 564, 597, 630];
const timeLabels = [
  "19 Mar 2025", "21 Mar 00:00", "24 Mar 08:00", "25 Mar 16:00", "27 Mar 00:00", "28 Mar 08:00",
  "31 Mar 16:00", "2 Apr 00:00", "3 Apr 08:00", "4 Apr 16:00", "8 Apr 00:00", "9 Apr 08:00",
  "10 Apr 16:00", "14 Apr 00:00", "15 Apr 08:00", "16 Apr 16:00", "18 Apr 00:00", "21 Apr 08:00",
  "22 Apr 16:00", "24 Apr 00:00", "25 Apr 08:00",
];

// mid price of the bars, read off the picture as [x, y] in page pixels
const path: [number, number][] = [
  [432, 548], [440, 557], [444, 545], [455, 542], [465, 547], [472, 570], [482, 577], [495, 567], [507, 572],
  [513, 580], [526, 573], [534, 587], [545, 585], [551, 577], [559, 582], [566, 572], [574, 577], [582, 593],
  [591, 592], [606, 592], [614, 598], [624, 582], [635, 590], [649, 597], [660, 598], [666, 593], [679, 600],
  [689, 618], [702, 603], [710, 607], [718, 597], [741, 593], [752, 597], [766, 605], [773, 580], [785, 583],
  [794, 575], [804, 577], [817, 590], [825, 587], [848, 580], [856, 585], [863, 597], [882, 593], [902, 597],
  [913, 583], [919, 565], [928, 555], [936, 542], [945, 533], [951, 495], [957, 460], [965, 470], [972, 490],
  [986, 470], [999, 503], [1013, 505], [1024, 530], [1035, 515], [1045, 490], [1061, 530], [1071, 535],
  [1086, 510], [1092, 525], [1107, 540], [1120, 513], [1130, 483], [1140, 473], [1155, 468], [1163, 505],
  [1173, 520], [1186, 510], [1190, 490], [1196, 470], [1202, 430], [1212, 410], [1219, 402], [1222, 360],
  [1227, 355], [1234, 368], [1238, 315], [1246, 335], [1255, 362], [1263, 345], [1273, 325], [1282, 322],
  [1292, 325], [1296, 345], [1304, 335], [1315, 338], [1322, 345], [1330, 338], [1338, 348], [1347, 368],
  [1351, 378], [1365, 365], [1370, 348], [1380, 328], [1392, 335], [1403, 318], [1415, 322], [1422, 335],
  [1430, 332], [1449, 338], [1468, 331], [1483, 332], [1491, 322], [1505, 320], [1508, 288], [1514, 265],
  [1526, 248], [1529, 245], [1537, 262], [1541, 272], [1552, 265], [1560, 270], [1570, 255], [1575, 272],
  [1587, 282], [1593, 298], [1600, 308], [1602, 330], [1610, 322], [1618, 325], [1625, 312], [1631, 318],
  [1635, 338], [1646, 353], [1654, 345], [1660, 338], [1665, 345], [1673, 325], [1685, 335], [1694, 323],
  [1702, 328], [1711, 348], [1719, 338], [1729, 342], [1733, 330],
];
const wicks: Record<number, [number, number]> = {
  929: [535, 590], 955: [435, 475], 1025: [500, 556], 1163: [480, 541], 1223: [328, 385],
  1239: [285, 335], 1603: [310, 352], 1529: [240, 268],
};

const halfRange = (x: number) => {
  if (x < 900) return 5;
  if (x < 950) return 7;
  if (x < 1300) return 13;
  if (x < 1430) return 9;
  if (x < 1490) return 4;
  if (x < 1506) return 3;
  return 9;
};

const buildBars = () => {
  let seed = 20250319;
  const rnd = () => {
    seed = (seed * 1664525 + 1013904223) % 4294967296;
    return seed / 4294967296;
  };
  let d = "";
  let seg = 0;
  for (let x = 433; x <= 1733; x += 2) {
    while (seg < path.length - 2 && path[seg + 1][0] < x) seg++;
    const [x0, y0] = path[seg];
    const [x1, y1] = path[seg + 1];
    const mid = y0 + ((y1 - y0) * (x - x0)) / (x1 - x0);
    const amp = halfRange(x);
    const centre = mid + (rnd() - 0.5) * amp;
    let top = Math.round(centre - amp * (0.25 + rnd() * 0.75));
    let low = Math.round(centre + amp * (0.25 + rnd() * 0.75));
    const wick = wicks[x];
    if (wick) [top, low] = wick;
    d += `M${x - 430 + 0.5} ${top - 215}V${low - 215}`;
  }
  return d;
};

const PriceChart = () => {
  const bars = useMemo(buildBars, []);
  const plotLeft = 2;
  const plotRight = 1308;
  const plotTop = 3;
  const plotBottom = 418;
  const colX = (i: number) => Math.round(3 + 32.07 * i);
  const columns = Array.from({ length: 41 }, (_, i) => colX(i));
  return (
    <ChartCanvas width="1348" height="436" viewBox="0 0 1348 436" shapeRendering="crispEdges">
      <g stroke="#778899" strokeDasharray="3 3">
        {gridRows.map((y) => (
          <line key={y} x1={plotLeft} x2={plotRight} y1={y - 215 + 0.5} y2={y - 215 + 0.5} />
        ))}
        {columns.map((x) => (
          <line key={x} x1={x + 0.5} x2={x + 0.5} y1={plotTop} y2={plotBottom} />
        ))}
      </g>
      <path d={bars} stroke="#00d400" fill="none" />
      <line x1={plotLeft} x2={plotRight} y1="115.500" y2="115.500" stroke="#b8bcc4" />
      <path
        d={`M${plotLeft + 0.5} ${plotBottom}V${plotTop + 0.5}H${plotRight + 0.5}V${plotBottom + 0.5}H${plotLeft + 0.5}`}
        stroke="#d8d8d8"
        fill="none"
      />
      <g stroke="#d8d8d8">
        {gridRows.map((y) => (
          <line key={y} x1={plotRight} x2={plotRight + 4} y1={y - 215 + 0.5} y2={y - 215 + 0.5} />
        ))}
        {timeLabels.map((_, i) => (
          <line key={i} x1={colX(i * 2) + 0.5} x2={colX(i * 2) + 0.5} y1={plotBottom} y2={plotBottom + 4} />
        ))}
      </g>
      <g shapeRendering="auto">
        <path d="M5 8h8l-4 4.500z" fill="#fff" />
        <ChartText x="18" y="14" fill="#f0f0e0" fontSize="10" xmlSpace="preserve">
          EURUSD,H1  1.13684 1.13756 1.13579 1.13730
        </ChartText>
        {priceLabels.map(([y, label]) => (
          <ChartText key={label} x="1314" y={y - 215 + 3.500} fill="#f0f0f0" fontSize="9.200">
            {label}
          </ChartText>
        ))}
        <rect x="1309" y="110" width="38" height="11" fill="#fff" />
        <ChartText x="1314" y="119" fill="#000" fontSize="9.200">1.13730</ChartText>
        {timeLabels.map((label, i) => (
          <ChartText key={label} x={i === 0 ? 2 : colX(i * 2) - 1} y="428" fill="#f0f0f0" fontSize="9.500">
            {label}
          </ChartText>
        ))}
      </g>
    </ChartCanvas>
  );
};

const TreeNode = ({
  pad, expander, open, icon, label, selected,
}: {
  pad: number; expander?: boolean; open?: boolean; icon: React.ReactNode; label: string; selected?: boolean;
}) => (
  <TreeRow $pad={pad}>
    <Expander $empty={!expander}>
      {expander && <ExpanderBar />}
      {expander && !open && <ExpanderBar $vertical />}
    </Expander>
    <TreeIcon>{icon}</TreeIcon>
    <TreeText $selected={selected}>{label}</TreeText>
  </TreeRow>
);

const menuTop = [
  { icon: <IcoAttach />, label: "Attach to a chart", hot: true },
  { icon: <IcoGear />, label: "Modify", key: "Enter" },
  { icon: <IcoDelete />, label: "Delete", key: "Delete" },
];
const menuMid = [
  { icon: <IcoMarket />, label: "Buy from the Market" },
  { icon: <IcoCase />, label: "Order your own Program" },
  { icon: <IcoPlus />, label: "Create in MetaEditor", key: "Insert" },
  { icon: <IcoStar />, label: "Add to Favorites" },
  { icon: <IcoHotkey />, label: "Set hotkey" },
  { icon: <IcoRefresh />, label: "Refresh" },
];

type MenuEntry = { icon: React.ReactNode; label: string; key?: string; hot?: boolean };
const renderMenu = (items: MenuEntry[]) =>
  items.map((m) => (
    <MenuItem key={m.label} $hot={m.hot}>
      <MenuIcon>{m.icon}</MenuIcon>
      <MenuText>{m.label}</MenuText>
      {m.key && <MenuKey>{m.key}</MenuKey>}
    </MenuItem>
  ));

export default function App() {
  return (
    <Page>
      <GlobalStyle />
      <MenuBar>
        {["File", "View", "Insert", "Charts", "Tools", "Window", "Help"].map((m) => (
          <MenuLabel key={m}>{m}</MenuLabel>
        ))}
      </MenuBar>

      <ToolRow>
        <Toolbar>
          <Grip />
          <DropBtn><IcoNewChart /><Caret /></DropBtn>
          <DropBtn><IcoProfiles /><Caret /></DropBtn>
          <ToolSep />
          <ToolBtn $active><IcoMarketWatch /></ToolBtn>
          <ToolBtn><IcoCrosshair /></ToolBtn>
          <ToolBtn $active><IcoNavigator /></ToolBtn>
          <ToolBtn $active><IcoTerminal /></ToolBtn>
          <ToolBtn><IcoTester /></ToolBtn>
          <ToolSep />
          <LabelBtn $width={87} $pad={4}><IcoNewOrder />New Order</LabelBtn>
          <ToolBtn><IcoBook /></ToolBtn>
          <ToolBtn><IcoCloud /></ToolBtn>
          <ToolBtn><IcoSignal /></ToolBtn>
          <LabelBtn $width={95} $pad={3}><IcoAuto />AutoTrading</LabelBtn>
        </Toolbar>
        <Toolbar>
          <Grip />
          <ToolBtn $active><IcoBars /></ToolBtn>
          <ToolBtn><IcoCandles /></ToolBtn>
          <ToolBtn><IcoLine /></ToolBtn>
          <ToolSep />
          <ToolBtn><IcoZoom /></ToolBtn>
          <ToolBtn><IcoZoom minus /></ToolBtn>
          <ToolBtn><IcoTile /></ToolBtn>
          <ToolSep />
          <ToolBtn $active><IcoScroll /></ToolBtn>
          <ToolBtn><IcoShift /></ToolBtn>
          <ToolSep />
          <DropBtn><IcoIndicator /><Caret /></DropBtn>
          <DropBtn><IcoClock /><Caret /></DropBtn>
          <DropBtn><IcoTemplate /><Caret /></DropBtn>
        </Toolbar>
        <SearchBox>
          <IcoSearch />
          <Bubble>
            <BubbleTail />
            <Badge>1</Badge>
          </Bubble>
        </SearchBox>
      </ToolRow>

      <ToolRow $last>
        <Toolbar>
          <Grip />
          <ToolBtn $active><IcoCursor /></ToolBtn>
          <ToolBtn><IcoCross /></ToolBtn>
          <ToolSep $gapLeft={3} />
          <ToolBtn><IcoVLine /></ToolBtn>
          <ToolBtn><IcoHLine /></ToolBtn>
          <ToolBtn><IcoTrend /></ToolBtn>
          <ToolBtn><IcoChannel /></ToolBtn>
          <ToolBtn><IcoFibo /></ToolBtn>
          <ToolBtn><IcoTextA /></ToolBtn>
          <ToolBtn><IcoTextT /></ToolBtn>
          <DropBtn><IcoShapes /><Caret /></DropBtn>
        </Toolbar>
        <Toolbar>
          <Grip />
          {["M1", "M5", "M15", "M30", "H1", "H4", "D1", "W1", "MN"].map((tf) => (
            <TfBtn key={tf} $active={tf === "H1"}>{tf}</TfBtn>
          ))}
        </Toolbar>
      </ToolRow>

      <Main>
        <LeftPanel>
          <PaneHead>
            <PaneTitle>Market Watch: 18:40:16</PaneTitle>
            <PaneClose>×</PaneClose>
          </PaneHead>
          <WatchFrame>
            <WatchTable>
              <WatchHeader>
                <WatchHeadCell>Symbol</WatchHeadCell>
                <WatchHeadCell $right>Bid</WatchHeadCell>
                <WatchHeadCell $right>Ask</WatchHeadCell>
              </WatchHeader>
              <WatchBody>
                {quotes.map(([sym, bid, ask, up, bg]) => {
                  const selected = bg === SEL_ROW;
                  const color = selected ? "#dfe6ff" : up ? "#2a1cff" : "#f02020";
                  return (
                    <WatchRowBox key={sym} $bg={bg} $selected={selected}>
                      <SymbolCell><ArrowMark up={up} />{sym}</SymbolCell>
                      <PriceCell $color={color}>{bid}</PriceCell>
                      <PriceCell $color={color}>{ask}</PriceCell>
                    </WatchRowBox>
                  );
                })}
              </WatchBody>
            </WatchTable>
            <ScrollBar>
              <ScrollArrow />
              <ScrollThumb />
              <ScrollArrow $down />
            </ScrollBar>
          </WatchFrame>
          <PaneTabs $height={28}>
            <ActiveTab $width={65}>Symbols</ActiveTab>
            <IdleTab>Tick Chart</IdleTab>
            <TabBar />
          </PaneTabs>

          <PaneHead>
            <PaneTitle $focused>Navigator</PaneTitle>
            <PaneClose>×</PaneClose>
          </PaneHead>
          <Tree>
            <TreeLines width="307" height="315" shapeRendering="crispEdges">
              <g stroke="#8a8a8a" strokeDasharray="1 1" fill="none">
                <path d="M13 20V173M13 29h12M13 47h12M13 65h12M13 173h12" />
                <path d="M35 75V155M35 83h11M35 101h11M35 119h11M35 137h11M35 155h11" />
              </g>
            </TreeLines>
            <TreeRow $pad={5}>
              <TreeIcon><IcoWindow /></TreeIcon>
              <TreeText>PlexyTrade MT4</TreeText>
            </TreeRow>
            <TreeNode pad={8.500} expander icon={<IcoAccounts />} label="Accounts" />
            <TreeNode pad={8.500} expander icon={<IcoIndicators />} label="Indicators" />
            <TreeNode pad={8.500} expander open icon={<IcoHat />} label="Expert Advisors" />
            <TreeNode pad={30.500} expander icon={<IcoHat />} label="Figaro app suite" />
            <TreeNode pad={30.500} icon={<IcoHat />} label="MACD Sample" />
            <TreeNode pad={30.500} icon={<IcoHat />} label="Moving Average" />
            <TreeNode pad={30.500} icon={<IcoHat grey />} label="R-C100" selected />
            <TreeNode pad={30.500} icon={<IcoHat grey />} label="Receive" />
            <TreeNode pad={8.500} expander icon={<IcoScript />} label="Scripts" />
          </Tree>
          <PaneTabs $height={24}>
            <ActiveTab $width={70}>Common</ActiveTab>
            <IdleTab>Favorites</IdleTab>
          </PaneTabs>
        </LeftPanel>

        <Workspace>
          <ChartWindow>
            <TitleBar>
              <IcoWindow />
              <WindowTitle>EURUSD,H1</WindowTitle>
              <Caption>
                <CaptionBtn>
                  <svg width="12" height="8"><rect x="1" y="3" width="10" height="4" fill="#f0f4fa" stroke="#44506a" /></svg>
                </CaptionBtn>
                <CaptionBtn>
                  <svg width="10" height="10"><rect x="1" y="1" width="8" height="8" fill="none" stroke="#eef2fa" strokeWidth="2" /><rect x="2.500" y="3" width="5" height="4" fill="none" stroke="#44506a" /></svg>
                </CaptionBtn>
                <CaptionBtn $close>
                  <svg width="12" height="10"><path d="M2 1l8 8M10 1L2 9" stroke="#fff" strokeWidth="2.400" /></svg>
                </CaptionBtn>
              </Caption>
            </TitleBar>
            <PriceChart />
          </ChartWindow>
        </Workspace>
      </Main>

      <ContextMenu>
        {renderMenu(menuTop)}
        <MenuRule />
        {renderMenu(menuMid)}
        <MenuRule />
        {renderMenu([{ icon: <IcoGlobe />, label: "Online library" }])}
      </ContextMenu>

      <Terminal>
        <TermSide>
          <TermClose>×</TermClose>
          <TermStrip><TermLabel>Terminal</TermLabel></TermStrip>
        </TermSide>
        <TermBody>
          <TermHeader>
            <TermHeadCell $left>Order<SortMark>/</SortMark></TermHeadCell>
            {termCols.map((c, i) => (
              <TermHeadCell key={i}>{c}</TermHeadCell>
            ))}
          </TermHeader>
          <BalanceRow>
            <BalanceDot />
            <BalanceText>Balance: 50 000.00 USD  Equity: 50 000.00  Free margin: 50 000.00</BalanceText>
            <BalanceProfit>0.00</BalanceProfit>
          </BalanceRow>
          <TermRows />
          <TermTabs>
            <TermTabActive>Trade</TermTabActive>
            {termTabs.map((t) => (
              <React.Fragment key={t}>
                <TermTab>
                  {t}
                  {t === "Mailbox" && <MailCount>7</MailCount>}
                </TermTab>
                <TabBar />
              </React.Fragment>
            ))}
          </TermTabs>
        </TermBody>
      </Terminal>

      <StatusBar>
        <StatusText>Execute expert on the chart</StatusText>
        <StatusCell $width={117}>Default</StatusCell>
        {statusCells.slice(1).map((w, i) => (
          <StatusCell key={i} $width={w} />
        ))}
        <StatusCell $width={127}>
          <svg width="23" height="14" viewBox="0 0 23 14" shapeRendering="crispEdges">
            {Array.from({ length: 12 }, (_, i) => (
              <g key={i}>
                <rect x={i * 2} y={0} width="1" height={Math.max(2, 7 - i / 2)} fill="#4f8a10" />
                <rect x={i * 2} y={13 - i} width="1" height={i + 1} fill="#a02a1a" />
              </g>
            ))}
          </svg>
          1280/1 kb
        </StatusCell>
      </StatusBar>
    </Page>
  );
}
